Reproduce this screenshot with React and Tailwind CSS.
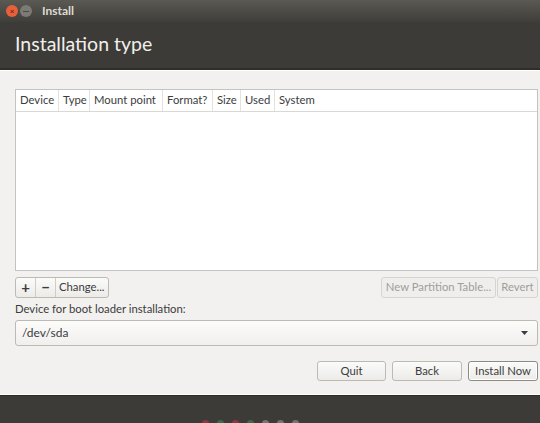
export default function App() {
  const font = { fontFamily: 'Lato, "Open Sans", sans-serif' };
  const cols = [
    ["Device", "w-[43px]"],
    ["Type", "w-[31px]"],
    ["Mount point", "w-[73px]"],
    ["Format?", "w-[50px]"],
    ["Size", "w-[28px]"],
    ["Used", "w-[34px]"],
    ["System", "flex-1"],
  ];
  return (
    <div className="w-[540px] h-[423px] overflow-hidden flex flex-col bg-[#f2f1f0] text-[#3c3c3c]" style={font}>
      {/* title bar */}
      <div className="h-[22px] shrink-0 flex items-center bg-gradient-to-b from-[#5a5952] to-[#3f3e3a] px-[6px] gap-[2px]">
        <div className="w-[12px] h-[12px] rounded-full bg-[#e8603a] flex items-center justify-center text-[8px] leading-none text-[#6b2a16] font-bold">×</div>
        <div className="w-[12px] h-[12px] rounded-full bg-[#7c7a74] flex items-center justify-center">
          <div className="w-[6px] h-[1px] bg-[#4b4a45]" />
        </div>
        <span className="ml-[8px] text-[12px] font-bold text-[#dfdbd2]">Install</span>
      </div>
      {/* header */}
      <div className="h-[48px] shrink-0 bg-[#3c3b37] flex items-center pl-[15px] pb-[3px] border-b-2 border-[#2f2e2b]">
        <span className="text-[19.5px] text-[#f0efec] leading-none">Installation type</span>
      </div>
      <div className="h-[1px] shrink-0 bg-[#ffffff]" />
      {/* body */}
      <div className="flex-1 flex flex-col pl-[15px] pr-[2px] pt-[18px] text-[11.3px]">
        <div className="h-[182px] shrink-0 bg-white border border-[#c5c3bf] flex flex-col">
          <div className="h-[22px] flex border-b border-[#dad8d4]">
            {cols.map(([c, w], i) => (
              <div key={c} className={`${w} flex items-center pl-[4px] ${i < cols.length - 1 ? "border-r border-[#e4e2de]" : ""}`}>
                {c}
              </div>
            ))}
          </div>
        </div>
        <div className="flex justify-between mt-[6px] h-[21px] shrink-0">
          <div className="flex border border-[#bdbab4] rounded-[3px] bg-gradient-to-b from-[#fbfbfa] to-[#ecebe8]">
            <div className="w-[20px] flex items-center justify-center border-r border-[#cfcdc8] text-[15px] font-bold leading-none">+</div>
            <div className="w-[20px] flex items-center justify-center border-r border-[#cfcdc8] text-[15px] font-bold leading-none">−</div>
            <div className="px-[3px] flex items-center">Change...</div>
          </div>
          <div className="flex gap-[1px] text-[#a09e99]">
            <div className="w-[115px] flex items-center justify-center border border-[#d6d4cf] rounded-[3px] bg-[#efeeec]">New Partition Table...</div>
            <div className="w-[41px] flex items-center justify-center border border-[#d6d4cf] rounded-[3px] bg-[#efeeec]">Revert</div>
          </div>
        </div>
        <div className="mt-[2px] h-[18px] shrink-0 flex items-center">Device for boot loader installation:</div>
        <div className="mt-[2px] h-[26px] shrink-0 border border-[#bdbab4] rounded-[3px] bg-gradient-to-b from-[#fcfcfb] to-[#f0efed] flex items-center justify-between pl-[6px] pr-[9px] text-[12px]">
          <span>/dev/sda</span>
          <svg width="7" height="4" viewBox="0 0 7 4"><path d="M0 0H7L3.5 4Z" fill="#3c3c3c" /></svg>
        </div>
        <div className="flex justify-end gap-[6px] mt-[15px] shrink-0">
          <div className="w-[69px] h-[20px] flex items-center justify-center border border-[#bdbab4] rounded-[3px] bg-gradient-to-b from-[#fbfbfa] to-[#ecebe8]">Quit</div>
          <div className="w-[70px] h-[20px] flex items-center justify-center border border-[#bdbab4] rounded-[3px] bg-gradient-to-b from-[#fbfbfa] to-[#ecebe8]">Back</div>
          <div className="w-[70px] h-[20px] flex items-center justify-center border border-[#8d8a84] rounded-[3px] bg-gradient-to-b from-[#fbfbfa] to-[#ecebe8] shadow-[inset_0_0_0_1px_#ffffff]">Install Now</div>
        </div>
      </div>
      {/* footer */}
      <div className="h-[1px] shrink-0 bg-[#ffffff]" />
      <div className="h-[28px] shrink-0 bg-[#3c3b37] border-t border-[#2c2b28] flex items-end justify-center gap-[8px] pr-[40px]">
        {["#8a3a3f", "#3e6a45", "#8a3a3f", "#3e6a45", "#77756f", "#77756f", "#77756f"].map((c, i) => (
          <div key={i} className="w-[7px] h-[7px] rounded-full mb-[-4px]" style={{ background: c }} />
        ))}
      </div>
    </div>
  );
}
